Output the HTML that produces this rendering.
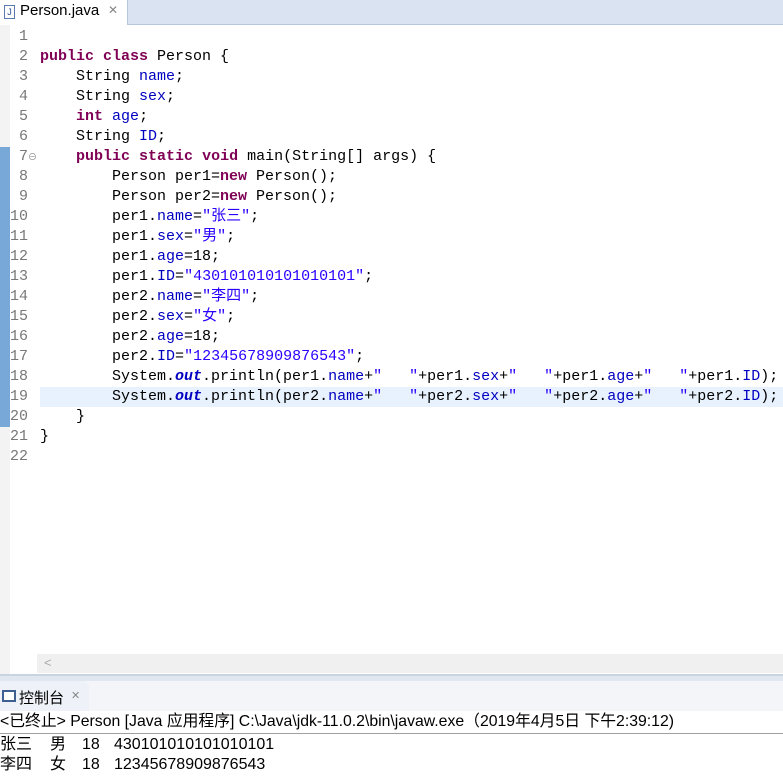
<!DOCTYPE html>
<html><head><meta charset="utf-8"><style>
body{margin:0;width:783px;height:777px;overflow:hidden;background:#fff;position:relative;font-family:"Liberation Sans","Noto Sans CJK SC",sans-serif}
.abs{position:absolute}
.code{font-family:"Liberation Mono","Noto Sans CJK SC",monospace;font-size:15px;line-height:20px;white-space:pre;color:#000}
.k{color:#7f0055;font-weight:bold}.f{color:#0000c0}.s{color:#2a00ff}.o{color:#0000c0;font-weight:bold;font-style:italic}
.ln{font-family:"Liberation Mono",monospace;font-size:15px;line-height:20px;color:#787878;text-align:right;width:28px;white-space:pre}
.out{position:absolute;font-size:16px;line-height:20px;white-space:pre;color:#000}
</style></head><body>
<div class="abs" style="left:0;top:0;width:783px;height:24px;background:#d9e3f1;border-bottom:1px solid #b7c6dc"></div>
<div class="abs" style="left:0;top:0;width:127px;height:25px;background:#fff;border-right:1px solid #b7c6dc"></div>
<div class="abs" style="left:4px;top:5px;width:9px;height:12px;border:1px solid #5a7ab0;background:#fff;font-size:9px;line-height:12px;color:#2a4f9a;text-align:center">J</div>
<div class="abs" style="left:20px;top:2px;font-size:15px;color:#000">Person.java</div>
<div class="abs" style="left:108px;top:3px;font-size:12px;color:#888">✕</div>
<div class="abs" style="left:0;top:25px;width:10px;height:650px;background:#f3f3f3"></div>
<div class="abs" style="left:0;top:147px;width:10px;height:280px;background:#4f8fcf;opacity:.75"></div>
<div class="abs" style="left:40px;top:387px;width:743px;height:20px;background:#e8f2fe"></div>
<div class="abs ln" style="left:0;top:27px">1
2
3
4
5
6
7
8
9
10
11
12
13
14
15
16
17
18
19
20
21
22</div>
<div class="abs" style="left:28px;top:150px;font-size:9px;color:#888">⊖</div>
<div class="abs code" style="left:40px;top:27px">
<span class="k">public</span> <span class="k">class</span> Person {
    String <span class="f">name</span>;
    String <span class="f">sex</span>;
    <span class="k">int</span> <span class="f">age</span>;
    String <span class="f">ID</span>;
    <span class="k">public</span> <span class="k">static</span> <span class="k">void</span> main(String[] args) {
        Person per1=<span class="k">new</span> Person();
        Person per2=<span class="k">new</span> Person();
        per1.<span class="f">name</span>=<span class="s">"张三"</span>;
        per1.<span class="f">sex</span>=<span class="s">"男"</span>;
        per1.<span class="f">age</span>=18;
        per1.<span class="f">ID</span>=<span class="s">"430101010101010101"</span>;
        per2.<span class="f">name</span>=<span class="s">"李四"</span>;
        per2.<span class="f">sex</span>=<span class="s">"女"</span>;
        per2.<span class="f">age</span>=18;
        per2.<span class="f">ID</span>=<span class="s">"12345678909876543"</span>;
        System.<span class="o">out</span>.println(per1.<span class="f">name</span>+<span class="s">"   "</span>+per1.<span class="f">sex</span>+<span class="s">"   "</span>+per1.<span class="f">age</span>+<span class="s">"   "</span>+per1.<span class="f">ID</span>);
        System.<span class="o">out</span>.println(per2.<span class="f">name</span>+<span class="s">"   "</span>+per2.<span class="f">sex</span>+<span class="s">"   "</span>+per2.<span class="f">age</span>+<span class="s">"   "</span>+per2.<span class="f">ID</span>);
    }
}
</div>
<div class="abs" style="left:37px;top:654px;width:746px;height:19px;background:#f0f0f0"></div>
<div class="abs" style="left:44px;top:655px;font-size:13px;color:#aaa">&lt;</div>
<div class="abs" style="left:0;top:674px;width:783px;height:2px;background:#c9d3e2"></div>
<div class="abs" style="left:0;top:676px;width:783px;height:5px;background:#e1e7f1"></div>
<div class="abs" style="left:0;top:681px;width:783px;height:30px;background:#f3f5f9"></div>
<div class="abs" style="left:0;top:681px;width:89px;height:30px;background:#eef2f8;border-radius:0 6px 0 0"></div>
<div class="abs" style="left:2px;top:690px;width:10px;height:8px;border:2px solid #3f5f90;background:#fff"></div>
<div class="abs" style="left:19px;top:687px;font-size:15px;color:#000">控制台</div>
<div class="abs" style="left:71px;top:689px;font-size:11px;color:#888">✕</div>
<div class="abs" style="left:0;top:711px;width:783px;height:22px;background:#fff;border-bottom:1px solid #a0a0a0"></div>
<div class="out" style="left:0;top:712px;font-size:15.8px">&lt;已终止&gt; Person [Java 应用程序] C:\Java\jdk-11.0.2\bin\javaw.exe（2019年4月5日 下午2:39:12)</div>
<div class="out" style="left:0;top:735px">张三</div>
<div class="out" style="left:50px;top:735px">男</div>
<div class="out" style="left:82px;top:735px">18</div>
<div class="out" style="left:114px;top:735px">430101010101010101</div>
<div class="out" style="left:0;top:755px">李四</div>
<div class="out" style="left:50px;top:755px">女</div>
<div class="out" style="left:82px;top:755px">18</div>
<div class="out" style="left:114px;top:755px">12345678909876543</div>
</body></html>
